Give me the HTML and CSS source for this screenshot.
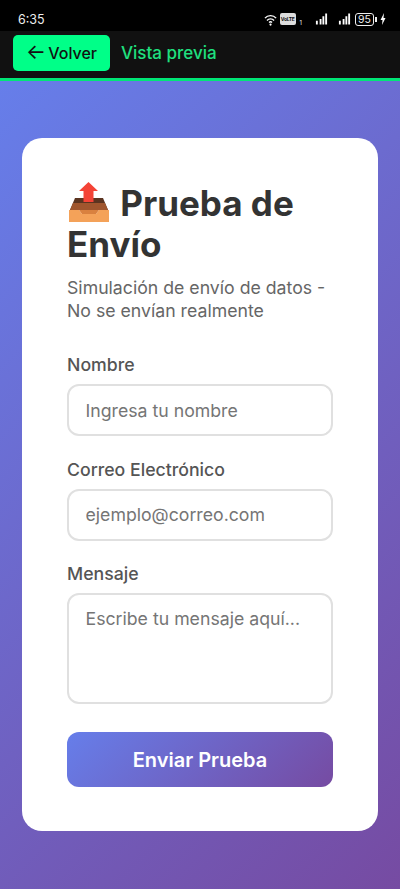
FILE: index.html
```html
<!DOCTYPE html>
<html lang="es">
<head>
    <meta charset="UTF-8">
    <meta name="viewport" content="width=device-width, initial-scale=1.0">
    <title>Prueba de Envío</title>
    <link rel="stylesheet" href="styles.css">
</head>
<body>
    <div class="status-bar">
        <span class="status-time">6:35</span>
        <div class="status-icons">
            <svg width="14" height="13" viewBox="0 0 15 14">
                <path d="M1 5.5 C4 2 10 2 13 5.5" fill="none" stroke="#fff" stroke-width="1.5"/>
                <path d="M3.2 8 C5.2 5.8 8.8 5.8 10.8 8" fill="none" stroke="#fff" stroke-width="1.5"/>
                <path d="M5.4 10.3 C6.4 9.3 7.6 9.3 8.6 10.3" fill="none" stroke="#fff" stroke-width="1.5"/>
                <circle cx="7" cy="12.5" r="1.2" fill="#fff"/>
            </svg>
            <span class="volte">VoLTE</span>
            <span class="sim-num">1</span>
            <svg class="signal" width="13" height="12" viewBox="0 0 14 12">
                <path d="M1 8h2v4H1zM5 6h2v6H5zM8 3h2v9H8zM11 0h2v12h-2z" fill="#fff"/>
            </svg>
            <svg class="signal signal-two" width="13" height="12" viewBox="0 0 14 12">
                <path d="M1 8h2v4H1zM5 6h2v6H5zM8 3h2v9H8zM11 0h2v12h-2z" fill="#fff"/>
            </svg>
            <span class="battery">95</span>
            <span class="battery-tip"></span>
            <svg width="6" height="12" viewBox="0 0 6 12">
                <path d="M4 0 L0.5 7 H2.5 L2 12 L5.5 5 H3.5 Z" fill="#fff"/>
            </svg>
        </div>
    </div>

    <header class="top-bar">
        <button class="back-btn" type="button"><span class="back-arrow">←</span> Volver</button>
        <span class="top-title">Vista previa</span>
    </header>

    <main class="page">
        <div class="card">
            <h1>
                <svg class="title-icon" width="40" height="40" viewBox="0 0 40 40">
                    <path d="M6 16 H34 L39 28 H1 Z" fill="#5b3420"/>
                    <path d="M4 21 H36 L39 28 H1 Z" fill="#a0562e"/>
                    <path d="M0 28 H10 L13 32 H27 L30 28 H40 V40 H0 Z" fill="#f4a259"/>
                    <path d="M10 28 H30 L27 32 H13 Z" fill="#d9813f"/>
                    <path d="M19.5 0 L29 9 H24.5 V20 H14.5 V9 H10 Z" fill="#f44336"/>
                </svg>
                Prueba de Envío
            </h1>
            <p class="subtitle">Simulación de envío de datos - No se envían realmente</p>

            <form>
                <div class="form-group">
                    <label for="nombre">Nombre</label>
                    <input type="text" id="nombre" placeholder="Ingresa tu nombre">
                </div>
                <div class="form-group">
                    <label for="correo">Correo Electrónico</label>
                    <input type="email" id="correo" placeholder="ejemplo@correo.com">
                </div>
                <div class="form-group">
                    <label for="mensaje">Mensaje</label>
                    <textarea id="mensaje" placeholder="Escribe tu mensaje aquí..."></textarea>
                </div>
                <button class="submit-btn" type="button">Enviar Prueba</button>
            </form>
        </div>
    </main>
</body>
</html>
```

FILE: styles.css
```css
* {
    box-sizing: border-box;
}

body {
    margin: 0;
    height: 889px;
    overflow: hidden;
    display: flex;
    flex-direction: column;
    font-family: "Inter", "Noto Sans", sans-serif;
    background-color: #000;
}

.status-bar {
    height: 31px;
    flex: none;
    background-color: #000;
    color: #eee;
    display: flex;
    justify-content: space-between;
    align-items: center;
    padding: 7px 14px 0 18px;
}

.status-time {
    font-size: 12.5px;
}

.status-icons {
    display: flex;
    align-items: center;
    gap: 2px;
}

.volte {
    background-color: #ddd;
    color: #111;
    font-size: 5px;
    font-weight: 700;
    padding: 3px 1px;
    border-radius: 2px;
    letter-spacing: -0.3px;
}

.sim-num {
    font-size: 6px;
    align-self: flex-end;
    margin: 0 11px 0 2px;
}

.signal-two {
    margin-left: 8px;
    margin-right: 2px;
}

.battery {
    border: 1.5px solid #eee;
    border-radius: 3px;
    font-size: 10.5px;
    line-height: 9px;
    width: 19px;
    text-align: center;
    padding: 1px 0;
}

.battery-tip {
    width: 2px;
    height: 5px;
    margin-left: -1px;
    margin-right: 1px;
    background-color: #eee;
}

.top-bar {
    height: 50px;
    flex: none;
    background-color: #111;
    border-bottom: 3px solid #00e676;
    display: flex;
    align-items: center;
    gap: 11px;
    padding: 0 13px 3px;
}

.back-btn {
    width: 97px;
    height: 36px;
    border: none;
    border-radius: 5px;
    background-color: #00ff88;
    color: #111;
    font-family: inherit;
    font-size: 16px;
    font-weight: 500;
    padding: 0;
    word-spacing: -2px;
}

.back-arrow {
    font-size: 21px;
    font-weight: 400;
    line-height: 0;
}

.top-title {
    color: #1fe07f;
    font-size: 17px;
    font-weight: 500;
}

.page {
    flex: 1;
    background: linear-gradient(135deg, #667eea 0%, #764ba2 100%);
    padding: 57px 22px 0;
}

.card {
    height: 693px;
    background-color: #fff;
    border-radius: 20px;
    padding: 44px 45px;
}

h1 {
    margin: 0 0 11px;
    color: #333;
    font-size: 35px;
    font-weight: 700;
    line-height: 41px;
}

.title-icon {
    width: 40px;
    height: 40px;
    vertical-align: -6px;
    margin: 0 3px 0 2px;
}

.subtitle {
    margin: 0 0 31px;
    color: #666;
    font-size: 17.7px;
    line-height: 23px;
}

.form-group {
    margin-bottom: 21.5px;
}

label {
    display: block;
    margin-bottom: 7px;
    color: #555;
    font-size: 17.7px;
    font-weight: 500;
    line-height: 24px;
}

input,
textarea {
    display: block;
    width: 100%;
    height: 52px;
    padding: 14px 16.5px;
    border: 2.5px solid #e0e0e0;
    border-radius: 12px;
    background-color: #fff;
    font-family: inherit;
    font-size: 17.7px;
    line-height: 24px;
}

textarea {
    height: 111px;
    padding-top: 11.5px;
    resize: none;
    background: linear-gradient(#444, #444) no-repeat right 0 bottom 0 / 2px 2px;
}

input::placeholder,
textarea::placeholder {
    color: #757575;
    opacity: 1;
}

.submit-btn {
    display: block;
    width: 100%;
    height: 55px;
    margin-top: 28px;
    border: none;
    border-radius: 12px;
    background: linear-gradient(135deg, #667eea 0%, #764ba2 100%);
    color: #fff;
    font-family: inherit;
    font-size: 20px;
    font-weight: 600;
}
```
